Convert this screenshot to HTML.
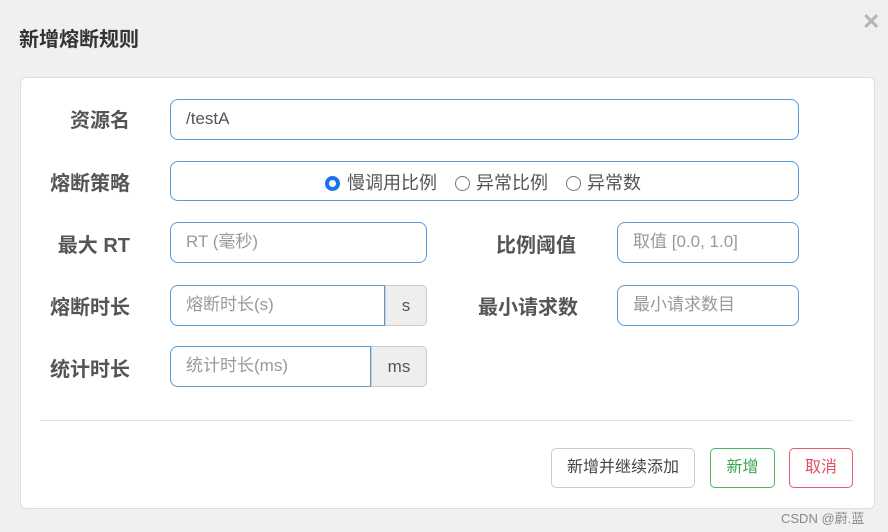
<!DOCTYPE html>
<html><head><meta charset="utf-8"><style>
*{box-sizing:border-box;margin:0;padding:0}
body{width:888px;height:532px;background:#f0f0f0;position:relative;overflow:hidden;font-family:"Liberation Sans","Noto Sans CJK SC",sans-serif;color:#555}
.a{position:absolute}
.title{left:19px;top:23px;font-size:20px;font-weight:bold;color:#333}
.x{left:862px;top:9px;font-size:22px;color:#b5b5b5;font-weight:bold}
.card{left:20px;top:77px;width:855px;height:432px;background:#fff;border:1px solid #ddd;border-radius:6px}
.lbl{font-size:20px;font-weight:bold;color:#555;text-align:right;width:120px;line-height:22px}
.in{border:1.5px solid #5b9bd5;border-radius:8px;background:#fff;font-size:17px;line-height:37px;padding-left:15px;color:#999}
.add{background:#eee;border:1px solid #ccc;border-radius:0 5px 5px 0;font-size:17px;text-align:center;color:#555}
.btn{border:1.5px solid #ccc;border-radius:5px;font-size:16px;text-align:center;line-height:37px;background:#fff}
.r{position:absolute;top:14px;width:15px;height:15px;border:1.5px solid #777;border-radius:50%}
.t{position:absolute;top:0;font-size:18px}
</style></head><body>
<div class="a title">新增熔断规则</div>
<div class="a x">✕</div>
<div class="a card"></div>
<div class="a lbl" style="left:10px;top:110px">资源名</div>
<div class="a in" style="left:170px;top:99px;width:629px;height:41px;color:#555">/testA</div>
<div class="a lbl" style="left:10px;top:173px">熔断策略</div>
<div class="a in" style="left:170px;top:161px;width:629px;height:40px;color:#555;line-height:42px">
<span class="r" style="left:154px;border:4px solid #1a73e8"></span><span class="t" style="left:176px">慢调用比例</span>
<span class="r" style="left:284px"></span><span class="t" style="left:305px">异常比例</span>
<span class="r" style="left:395px"></span><span class="t" style="left:416px">异常数</span></div>
<div class="a lbl" style="left:10px;top:235px">最大 RT</div>
<div class="a in" style="left:170px;top:222px;width:257px;height:41px">RT (毫秒)</div>
<div class="a lbl" style="left:456px;top:235px">比例阈值</div>
<div class="a in" style="left:617px;top:222px;width:182px;height:41px">取值 [0.0, 1.0]</div>
<div class="a lbl" style="left:10px;top:297px">熔断时长</div>
<div class="a in" style="left:170px;top:285px;width:215px;height:41px;border-radius:8px 0 0 8px">熔断时长(s)</div>
<div class="a add" style="left:385px;top:285px;width:42px;height:41px;line-height:39px">s</div>
<div class="a lbl" style="left:458px;top:297px">最小请求数</div>
<div class="a in" style="left:617px;top:285px;width:182px;height:41px">最小请求数目</div>
<div class="a lbl" style="left:10px;top:359px">统计时长</div>
<div class="a in" style="left:170px;top:346px;width:201px;height:41px;border-radius:8px 0 0 8px">统计时长(ms)</div>
<div class="a add" style="left:371px;top:346px;width:56px;height:41px;line-height:39px">ms</div>
<div class="a" style="left:40px;top:420px;width:813px;height:1px;background:#e3e3e3"></div>
<div class="a btn" style="left:551px;top:448px;width:144px;height:40px;color:#444">新增并继续添加</div>
<div class="a btn" style="left:710px;top:448px;width:65px;height:40px;border-color:#4cb860;color:#3aa34d">新增</div>
<div class="a btn" style="left:789px;top:448px;width:64px;height:40px;border-color:#e65a6a;color:#e0505f">取消</div>
<div class="a" style="left:781px;top:508px;font-size:13px;color:#888">CSDN @蔚.蓝</div>
</body></html>
